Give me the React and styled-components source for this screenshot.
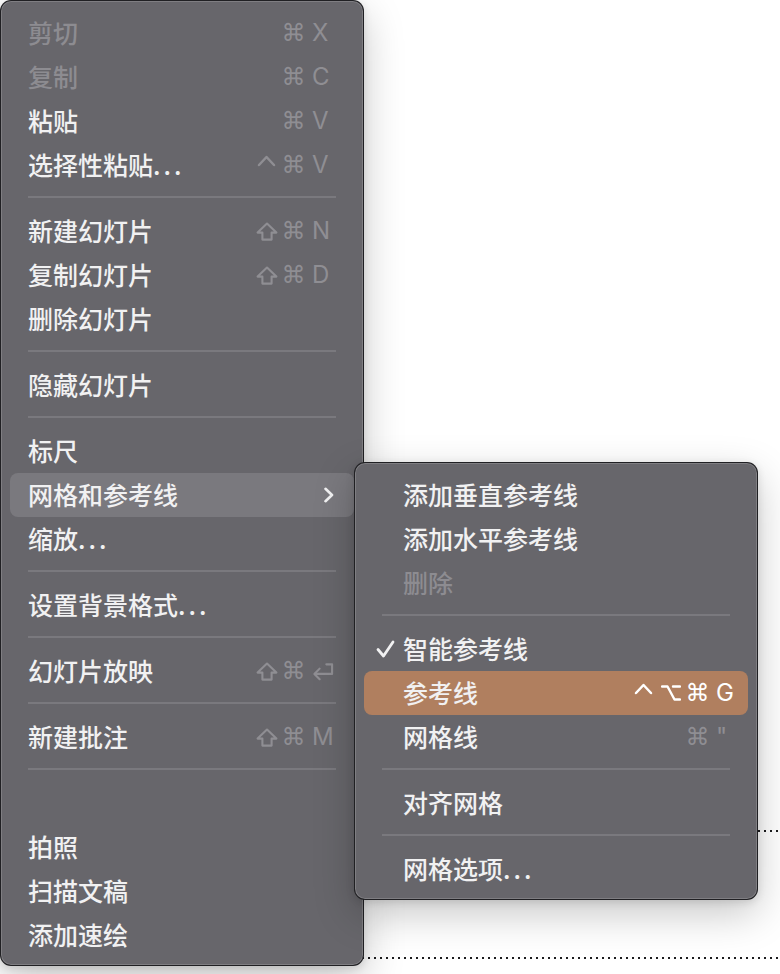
import React from 'react';
import styled, { createGlobalStyle } from 'styled-components';

const GlobalStyle = createGlobalStyle`
  html, body { margin: 0; padding: 0; background: #ffffff; }
  body { font-family: "Noto Sans CJK SC", "Noto Sans", sans-serif; }
`;

const Stage = styled.div`
  position: relative;
  width: 780px;
  height: 974px;
  overflow: hidden;
  background: #ffffff;
`;

const Placeholder = styled.div`
  position: absolute;
  left: 200px;
  top: 830px;
  width: 700px;
  height: 129px;
  &::before,
  &::after {
    content: '';
    position: absolute;
    left: 0;
    right: 0;
    height: 2px;
    background: repeating-linear-gradient(90deg, #1c1c1e 0 2px, transparent 2px 6px);
  }
  &::before { top: 0; }
  &::after { bottom: 0; }
`;

const Menu = styled.div`
  position: absolute;
  left: ${(p) => p.$x}px;
  top: ${(p) => p.$y}px;
  width: ${(p) => p.$w}px;
  box-sizing: border-box;
  padding: 10px 0 8px;
  display: flex;
  flex-direction: column;
  background: #67666b;
  border: 1px solid rgba(20, 20, 22, 0.85);
  border-radius: 11px;
  box-shadow: inset 0 0 0 1px rgba(255, 255, 255, 0.16), 0 14px 40px rgba(0, 0, 0, 0.22),
    0 2px 8px rgba(0, 0, 0, 0.12);
`;

const Row = styled.div`
  display: flex;
  align-items: center;
  height: 44px;
  margin: 0 9px;
  padding-right: ${(p) => p.$pr}px;
  border-radius: 8px;
  background: ${(p) =>
    p.$state === 'hover' ? '#7a797e' : p.$state === 'select' ? '#b07f5f' : 'transparent'};
  color: ${(p) => (p.$disabled ? '#8d8c91' : '#f1f1f2')};
  --sc-color: ${(p) => (p.$state === 'select' ? '#ffffff' : '#8f8e93')};
`;

const Gutter = styled.div`
  flex: none;
  width: ${(p) => p.$w}px;
  height: 100%;
  display: flex;
  align-items: center;
  padding-left: 12px;
  box-sizing: border-box;
`;

const Label = styled.span`
  flex: 1;
  font-size: 25px;
  font-weight: 500;
  line-height: 40px;
  margin-bottom: 3px;
  white-space: nowrap;
`;

const Dots = styled.span`
  letter-spacing: 3px;
`;

const Keys = styled.div`
  display: flex;
  align-items: center;
  height: 100%;
  color: var(--sc-color);
`;

const Mod = styled.span`
  flex: none;
  width: 27px;
  height: 44px;
  display: flex;
  align-items: center;
  justify-content: center;
  font-family: "DejaVu Sans", sans-serif;
  font-size: 24px;
  line-height: 44px;
`;

const KeyChar = styled.span`
  flex: none;
  width: 22px;
  margin-left: 5px;
  height: 44px;
  display: flex;
  align-items: center;
  font-family: Inter, sans-serif;
  font-size: 24px;
  line-height: 44px;
`;

const Check = () => (
  <svg width="19" height="18" viewBox="0 0 19 18">
    <polyline points="2,9.5 7.5,16 17,2" fill="none" stroke="#f1f1f2" strokeWidth="2.8"
      strokeLinecap="round" strokeLinejoin="round" />
  </svg>
);

const Chevron = () => (
  <svg width="11" height="16" viewBox="0 0 11 16">
    <polyline points="2.5,1.8 9,8 2.5,14.2" fill="none" stroke="#f1f1f2" strokeWidth="2.6"
      strokeLinecap="round" strokeLinejoin="round" />
  </svg>
);

const ShiftIcon = () => (
  <svg width="22" height="19" viewBox="0 0 22 19">
    <path d="M11 1.6 L20.4 10.6 H15.6 V17.6 H6.4 V10.6 H1.6 Z" fill="none" stroke="currentColor"
      strokeWidth="2.1" strokeLinejoin="round" />
  </svg>
);

const CtrlIcon = () => (
  <svg width="19" height="22" viewBox="0 0 19 22">
    <polyline points="2,11 9.5,3 17,11" fill="none" stroke="currentColor" strokeWidth="2.5"
      strokeLinecap="round" strokeLinejoin="round" />
  </svg>
);

const OptIcon = () => (
  <svg width="20" height="18" viewBox="0 0 20 18">
    <path d="M1 2.5 H6.5 L13.5 15.5 H19 M12 2.5 H19" fill="none" stroke="currentColor"
      strokeWidth="2.4" strokeLinecap="round" strokeLinejoin="round" />
  </svg>
);

const ReturnIcon = () => (
  <svg width="23" height="19" viewBox="0 0 23 19">
    <path d="M15 2 H21 V12 H3" fill="none" stroke="currentColor" strokeWidth="2.2"
      strokeLinecap="round" strokeLinejoin="round" />
    <polyline points="8,6.5 2.5,12 8,17.5" fill="none" stroke="currentColor" strokeWidth="2.2"
      strokeLinecap="round" strokeLinejoin="round" />
  </svg>
);

const modMap = {
  shift: <ShiftIcon />,
  ctrl: <CtrlIcon />,
  opt: <OptIcon />,
  cmd: '⌘',
};

const mainItems = [
  { label: '剪切', disabled: true, mods: ['cmd'], k: 'X' },
  { label: '复制', disabled: true, mods: ['cmd'], k: 'C' },
  { label: '粘贴', mods: ['cmd'], k: 'V' },
  { label: '选择性粘贴', dots: true, mods: ['ctrl', 'cmd'], k: 'V' },
  'sep',
  { label: '新建幻灯片', mods: ['shift', 'cmd'], k: 'N' },
  { label: '复制幻灯片', mods: ['shift', 'cmd'], k: 'D' },
  { label: '删除幻灯片' },
  'sep',
  { label: '隐藏幻灯片' },
  'sep',
  { label: '标尺' },
  { label: '网格和参考线', state: 'hover', sub: true },
  { label: '缩放', dots: true },
  'sep',
  { label: '设置背景格式', dots: true },
  'sep',
  { label: '幻灯片放映', mods: ['shift', 'cmd'], k: <ReturnIcon /> },
  'sep',
  { label: '新建批注', mods: ['shift', 'cmd'], k: 'M' },
  'sep',
  { label: '' },
  { label: '拍照' },
  { label: '扫描文稿' },
  { label: '添加速绘' },
];

const subItems = [
  { label: '添加垂直参考线' },
  { label: '添加水平参考线' },
  { label: '删除', disabled: true },
  'sep',
  { label: '智能参考线', checked: true },
  { label: '参考线', state: 'select', mods: ['ctrl', 'opt', 'cmd'], k: 'G' },
  { label: '网格线', mods: ['cmd'], k: '"' },
  'sep',
  { label: '对齐网格' },
  'sep',
  { label: '网格选项', dots: true },
];

const Separator = styled.div`
  height: 2px;
  margin: 9px 27px 11px;
  background: #7a797e;
`;

const MenuList = ({ items, gutter, pr, ...rest }) => (
  <Menu {...rest}>
    {items.map((it, i) =>
      it === 'sep' ? (
        <Separator key={i} />
      ) : (
        <Row key={i} $state={it.state} $disabled={it.disabled} $pr={pr}>
          <Gutter $w={gutter}>{it.checked && <Check />}</Gutter>
          <Label>
            {it.label}
            {it.dots && <Dots>...</Dots>}
          </Label>
          {it.k && (
            <Keys>
              {it.mods.map((m, j) => (
                <Mod key={j}>{modMap[m]}</Mod>
              ))}
              <KeyChar>{it.k}</KeyChar>
            </Keys>
          )}
          {it.sub && <Chevron />}
        </Row>
      )
    )}
  </Menu>
);

export default function App() {
  return (
    <>
      <GlobalStyle />
      <Stage>
        <Placeholder />
        <MenuList items={mainItems} gutter={18} pr={20} $x={0} $y={0} $w={364} />
        <MenuList items={subItems} gutter={39} pr={10} $x={354} $y={462} $w={404} />
      </Stage>
    </>
  );
}
